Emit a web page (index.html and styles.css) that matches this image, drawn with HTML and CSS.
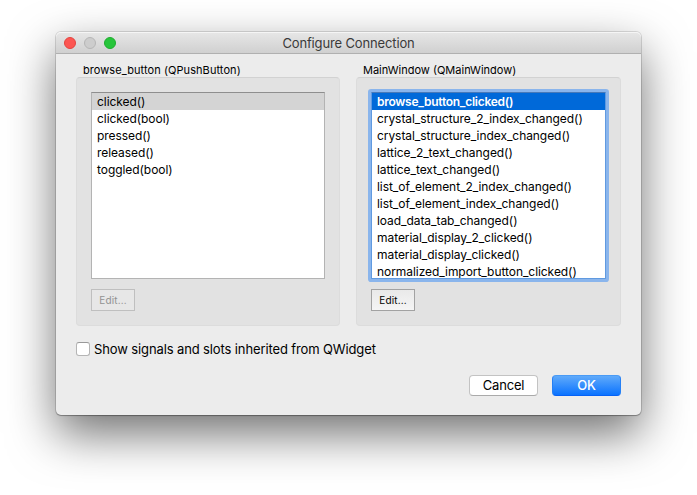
FILE: index.html
```html
<!DOCTYPE html>
<html lang="en">
<head>
<meta charset="utf-8">
<title>Configure Connection</title>
<link rel="stylesheet" href="styles.css">
</head>
<body>
<main class="window">
  <header class="titlebar">
    <div class="lights"><span class="light close"></span><span class="light minimize"></span><span class="light zoom"></span></div>
    <h1 class="title">Configure Connection</h1>
  </header>
  <div class="content">
    <div class="groups">
      <section class="group">
        <h2 class="group-title signals-title">browse_button (QPushButton)</h2>
        <div class="panel">
          <ul class="list">
            <li class="selected">clicked()</li>
            <li>clicked(bool)</li>
            <li>pressed()</li>
            <li>released()</li>
            <li>toggled(bool)</li>
          </ul>
          <button class="edit" disabled>Edit...</button>
        </div>
      </section>
      <section class="group">
        <h2 class="group-title">MainWindow (QMainWindow)</h2>
        <div class="panel">
          <ul class="list focused">
            <li class="selected">browse_button_clicked()</li>
            <li>crystal_structure_2_index_changed()</li>
            <li>crystal_structure_index_changed()</li>
            <li>lattice_2_text_changed()</li>
            <li>lattice_text_changed()</li>
            <li>list_of_element_2_index_changed()</li>
            <li>list_of_element_index_changed()</li>
            <li>load_data_tab_changed()</li>
            <li>material_display_2_clicked()</li>
            <li>material_display_clicked()</li>
            <li>normalized_import_button_clicked()</li>
          </ul>
          <button class="edit">Edit...</button>
        </div>
      </section>
    </div>
    <label class="inherit"><input class="checkbox" type="checkbox"><span>Show signals and slots inherited from QWidget</span></label>
    <footer class="actions">
      <button class="action">Cancel</button>
      <button class="action primary">OK</button>
    </footer>
  </div>
</main>
</body>
</html>
```
FILE: styles.css
```css
* { box-sizing: border-box; }
body {
  margin: 0;
  height: 495px;
  overflow: hidden;
  background: #fff;
  color: #000;
  font-family: Inter, "Liberation Sans", sans-serif;
}
button { font-family: inherit; padding: 0; margin: 0; }
.window {
  width: 585px;
  height: 383px;
  margin: 32px 0 0 56px;
  display: flex;
  flex-direction: column;
  border-radius: 5px;
  background: #ececec;
  box-shadow: 0 0 0 1px rgba(0,0,0,.12), 0 1px 1px rgba(0,0,0,.25), 0 19px 47px rgba(0,0,0,.56);
}
.titlebar {
  height: 22px;
  flex: none;
  display: grid;
  grid-template-columns: 1fr auto 1fr;
  align-items: center;
  padding: 0 8px;
  border-radius: 5px 5px 0 0;
  border-bottom: 1px solid #b0b0b0;
  background: linear-gradient(#e7e7e7, #d0d0d0);
  box-shadow: inset 0 1px #f5f5f5;
}
.lights { display: flex; gap: 8px; }
.light { width: 12px; height: 12px; border-radius: 50%; border: 1px solid; }
.close { background: #fc5652; border-color: #e4443f; }
.minimize { background: #cdcdcd; border-color: #b6b6b6; }
.zoom { background: #27c53b; border-color: #1ead2e; }
.title { margin: 1px 0 0; font-size: 13px; line-height: 20px; font-weight: 400; color: #3a3a3a; letter-spacing: -.14px; }
.content { padding: 8px 20px 19px; display: flex; flex-direction: column; flex: 1; }
.groups { display: grid; grid-template-columns: 264px 265px; gap: 16px; }
.group-title { height: 15px; margin: 0 0 0 7px; font-size: 11px; line-height: 17px; font-weight: 400; white-space: nowrap; }
.signals-title { letter-spacing: .07px; }
.panel {
  height: 249px;
  padding: 14px;
  border: 1px solid #dcdcdc;
  border-top-color: #d2d2d2;
  border-radius: 4px;
  background: #e2e2e2;
}
.list {
  height: 187px;
  margin: 0 0 10px;
  padding: 0;
  overflow: hidden;
  border: 1px solid #b3b3b3;
  border-top-color: #8e8e8e;
  background: #fff;
  list-style: none;
  font-size: 12px;
  line-height: 17px;
  letter-spacing: -.06px;
}
.list li { height: 17px; padding-left: 5px; white-space: nowrap; }
.list .selected { background: #d4d4d4; }
.focused { border-color: #609ae0; border-top-color: #4779b9; border-radius: 1px; box-shadow: 0 0 0 3px #8ab5ec; }
.focused .selected { background: #0069d9; color: #fff; font-weight: 600; letter-spacing: -.27px; }
.edit {
  display: block;
  width: 44px;
  height: 22px;
  border: 1px solid #a2a2a2;
  background: linear-gradient(#e9e9e9, #f5f5f5);
  color: #000;
  font-size: 10px;
  line-height: 20px;
  letter-spacing: .12px;
}
.edit:disabled { border-color: #bfbfbf; background: #e7e7e7; color: #929292; }
.inherit { display: flex; align-items: center; gap: 4px; height: 16px; margin-top: 15px; font-size: 13px; line-height: 16px; letter-spacing: -.12px; }
.checkbox { appearance: none; width: 14px; height: 14px; margin: 0; border: 1px solid #b5b5b5; border-top-color: #999; border-radius: 3px; background: #fff; }
.actions { display: flex; justify-content: flex-end; gap: 14px; margin-top: auto; }
.action { width: 69px; height: 21px; border: 1px solid #c3c3c3; border-bottom-color: #aaa; border-radius: 4px; background: #fff; color: #000; font-size: 13px; line-height: 19px; letter-spacing: -.2px; }
.primary { border-color: #4a9bf5 #2580f5 #0561f5; background: linear-gradient(#60aafa, #0a73ff); color: #fff; font-weight: 500; }
```
